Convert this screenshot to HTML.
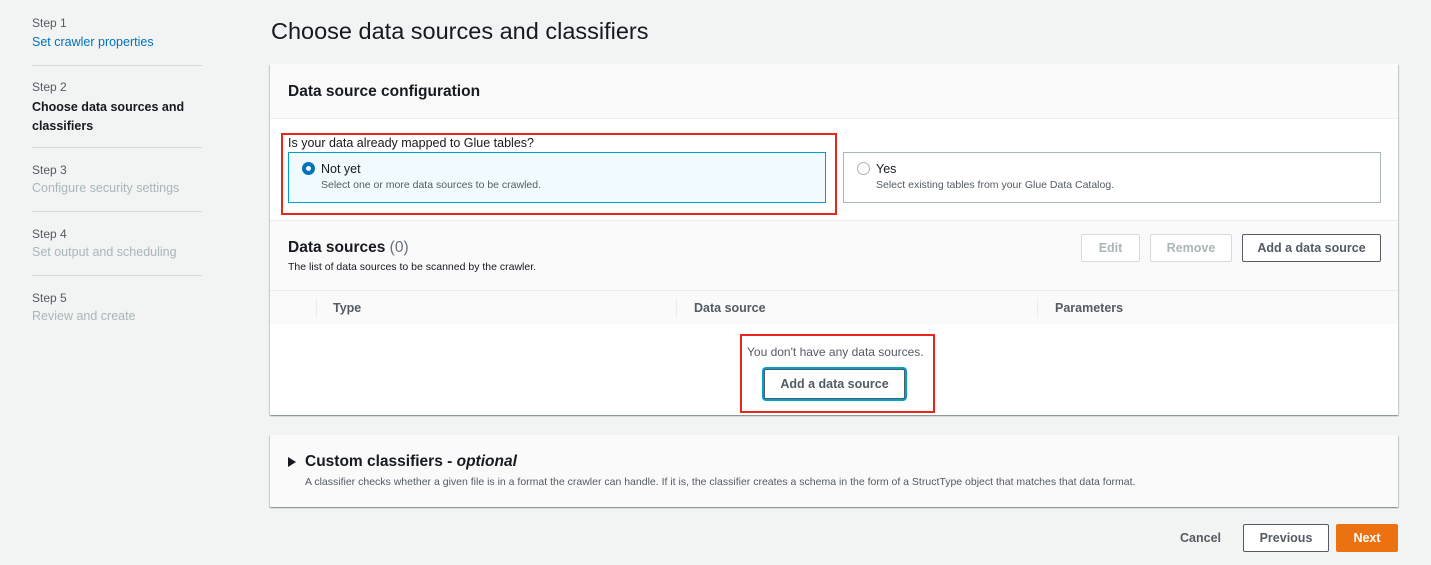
<!DOCTYPE html>
<html><head><style>
*{box-sizing:border-box;margin:0;padding:0}
body{width:1431px;height:565px;background:#f2f3f3;font-family:"Liberation Sans",sans-serif;color:#16191f;position:relative;overflow:hidden}
.a{position:absolute;white-space:nowrap}
.s{font-size:12px;color:#545b64}
.hr{position:absolute;left:32px;width:170px;height:1px;background:#d5dbdb}
.btn{position:absolute;border:1px solid #545b64;border-radius:2px;background:#fff;font-weight:bold;font-size:12.5px;color:#545b64;display:flex;align-items:center;justify-content:center}
.dis{border-color:#d5dbdb;color:#aab7b8}
.red{position:absolute;border:2px solid #e8261b}
</style></head><body>
<div class="a s" style="left:32px;top:16px">Step 1</div>
<div class="a" style="left:32px;top:35px;font-size:12.5px;color:#0073bb">Set crawler properties</div>
<div class="hr" style="top:65px"></div>
<div class="a s" style="left:32px;top:80px">Step 2</div>
<div class="a" style="left:32px;top:98px;font-size:12.5px;font-weight:bold;line-height:19px">Choose data sources and<br>classifiers</div>
<div class="hr" style="top:147px"></div>
<div class="a s" style="left:32px;top:163px">Step 3</div>
<div class="a" style="left:32px;top:181px;font-size:12.5px;color:#aab7b8">Configure security settings</div>
<div class="hr" style="top:211px"></div>
<div class="a s" style="left:32px;top:227px">Step 4</div>
<div class="a" style="left:32px;top:245px;font-size:12.5px;color:#aab7b8">Set output and scheduling</div>
<div class="hr" style="top:275px"></div>
<div class="a s" style="left:32px;top:291px">Step 5</div>
<div class="a" style="left:32px;top:309px;font-size:12.5px;color:#aab7b8">Review and create</div>

<div class="a" style="left:271px;top:18px;font-size:23.5px;color:#16191f">Choose data sources and classifiers</div>

<div class="a" style="left:270px;top:64px;width:1128px;height:351px;background:#fff;box-shadow:0 1px 1px rgba(0,28,36,.3),1px 1px 1px rgba(0,28,36,.15),-1px 1px 1px rgba(0,28,36,.15)">
 <div class="a" style="left:0;top:0;width:100%;height:55px;background:#fafafa;border-bottom:1px solid #eaeded"></div>
 <div class="a" style="left:18px;top:19px;font-size:15.5px;font-weight:bold">Data source configuration</div>
 <div class="a" style="left:0;top:156px;width:100%;height:104px;background:#fafafa;border-top:1px solid #eaeded;border-bottom:1px solid #eaeded"></div>
 <div class="a" style="left:18px;top:72px;font-size:12.5px">Is your data already mapped to Glue tables?</div>
 <div class="a" style="left:18px;top:88px;width:538px;height:51px;background:#f1faff;border:1px solid #00a1c9"></div>
 <div class="a" style="left:32px;top:98px;width:13px;height:13px;border-radius:50%;border:4px solid #0073bb;background:#fff"></div>
 <div class="a" style="left:51px;top:98px;font-size:12.5px">Not yet</div>
 <div class="a s" style="left:51px;top:115px;font-size:10.5px">Select one or more data sources to be crawled.</div>
 <div class="a" style="left:573px;top:88px;width:538px;height:51px;background:#fff;border:1px solid #aab7b8"></div>
 <div class="a" style="left:587px;top:98px;width:13px;height:13px;border-radius:50%;border:1px solid #aab7b8;background:#fff"></div>
 <div class="a" style="left:606px;top:98px;font-size:12.5px">Yes</div>
 <div class="a s" style="left:606px;top:115px;font-size:10.5px">Select existing tables from your Glue Data Catalog.</div>
 <div class="a" style="left:18px;top:175px;font-size:15.5px;font-weight:bold">Data sources <span style="font-weight:normal;color:#687078">(0)</span></div>
 <div class="a s" style="left:18px;top:197px;font-size:10.5px;color:#16191f">The list of data sources to be scanned by the crawler.</div>
 <div class="btn dis" style="left:811px;top:170px;width:59px;height:28px">Edit</div>
 <div class="btn dis" style="left:880px;top:170px;width:82px;height:28px">Remove</div>
 <div class="btn" style="left:972px;top:170px;width:139px;height:28px;color:#545b64">Add a data source</div>
 <div class="a" style="left:0;top:226px;width:100%;height:34px;background:#fafafa;border-top:1px solid #eaeded"></div>
 <div class="a" style="left:46px;top:234px;width:1px;height:20px;background:#eaeded"></div>
 <div class="a" style="left:406px;top:234px;width:1px;height:20px;background:#eaeded"></div>
 <div class="a" style="left:767px;top:234px;width:1px;height:20px;background:#eaeded"></div>
 <div class="a" style="left:63px;top:237px;font-size:12.5px;font-weight:bold;color:#545b64">Type</div>
 <div class="a" style="left:424px;top:237px;font-size:12.5px;font-weight:bold;color:#545b64">Data source</div>
 <div class="a" style="left:785px;top:237px;font-size:12.5px;font-weight:bold;color:#545b64">Parameters</div>
 <div class="a" style="left:477px;top:281px;font-size:12px;color:#545b64">You don't have any data sources.</div>
 <div class="btn" style="left:494px;top:305px;width:141px;height:30px;box-shadow:0 0 0 2px #00a1c9;color:#545b64">Add a data source</div>
</div>

<div class="red" style="left:281px;top:133px;width:556px;height:82px"></div>
<div class="red" style="left:740px;top:334px;width:195px;height:79px"></div>

<div class="a" style="left:270px;top:435px;width:1128px;height:72px;background:#fafafa;box-shadow:0 1px 1px rgba(0,28,36,.3),1px 1px 1px rgba(0,28,36,.15),-1px 1px 1px rgba(0,28,36,.15)">
 <div class="a" style="left:18px;top:22px;width:0;height:0;border-left:8px solid #16191f;border-top:5px solid transparent;border-bottom:5px solid transparent"></div>
 <div class="a" style="left:35px;top:18px;font-size:15.5px;font-weight:bold">Custom classifiers - <i>optional</i></div>
 <div class="a s" style="left:35px;top:41px;font-size:10.5px">A classifier checks whether a given file is in a format the crawler can handle. If it is, the classifier creates a schema in the form of a StructType object that matches that data format.</div>
</div>

<div class="a" style="left:1180px;top:531px;font-size:12.5px;font-weight:bold;color:#545b64">Cancel</div>
<div class="btn" style="left:1243px;top:524px;width:86px;height:28px">Previous</div>
<div class="btn" style="left:1336px;top:524px;width:62px;height:28px;background:#ec7211;border-color:#ec7211;color:#fff">Next</div>
</body></html>
